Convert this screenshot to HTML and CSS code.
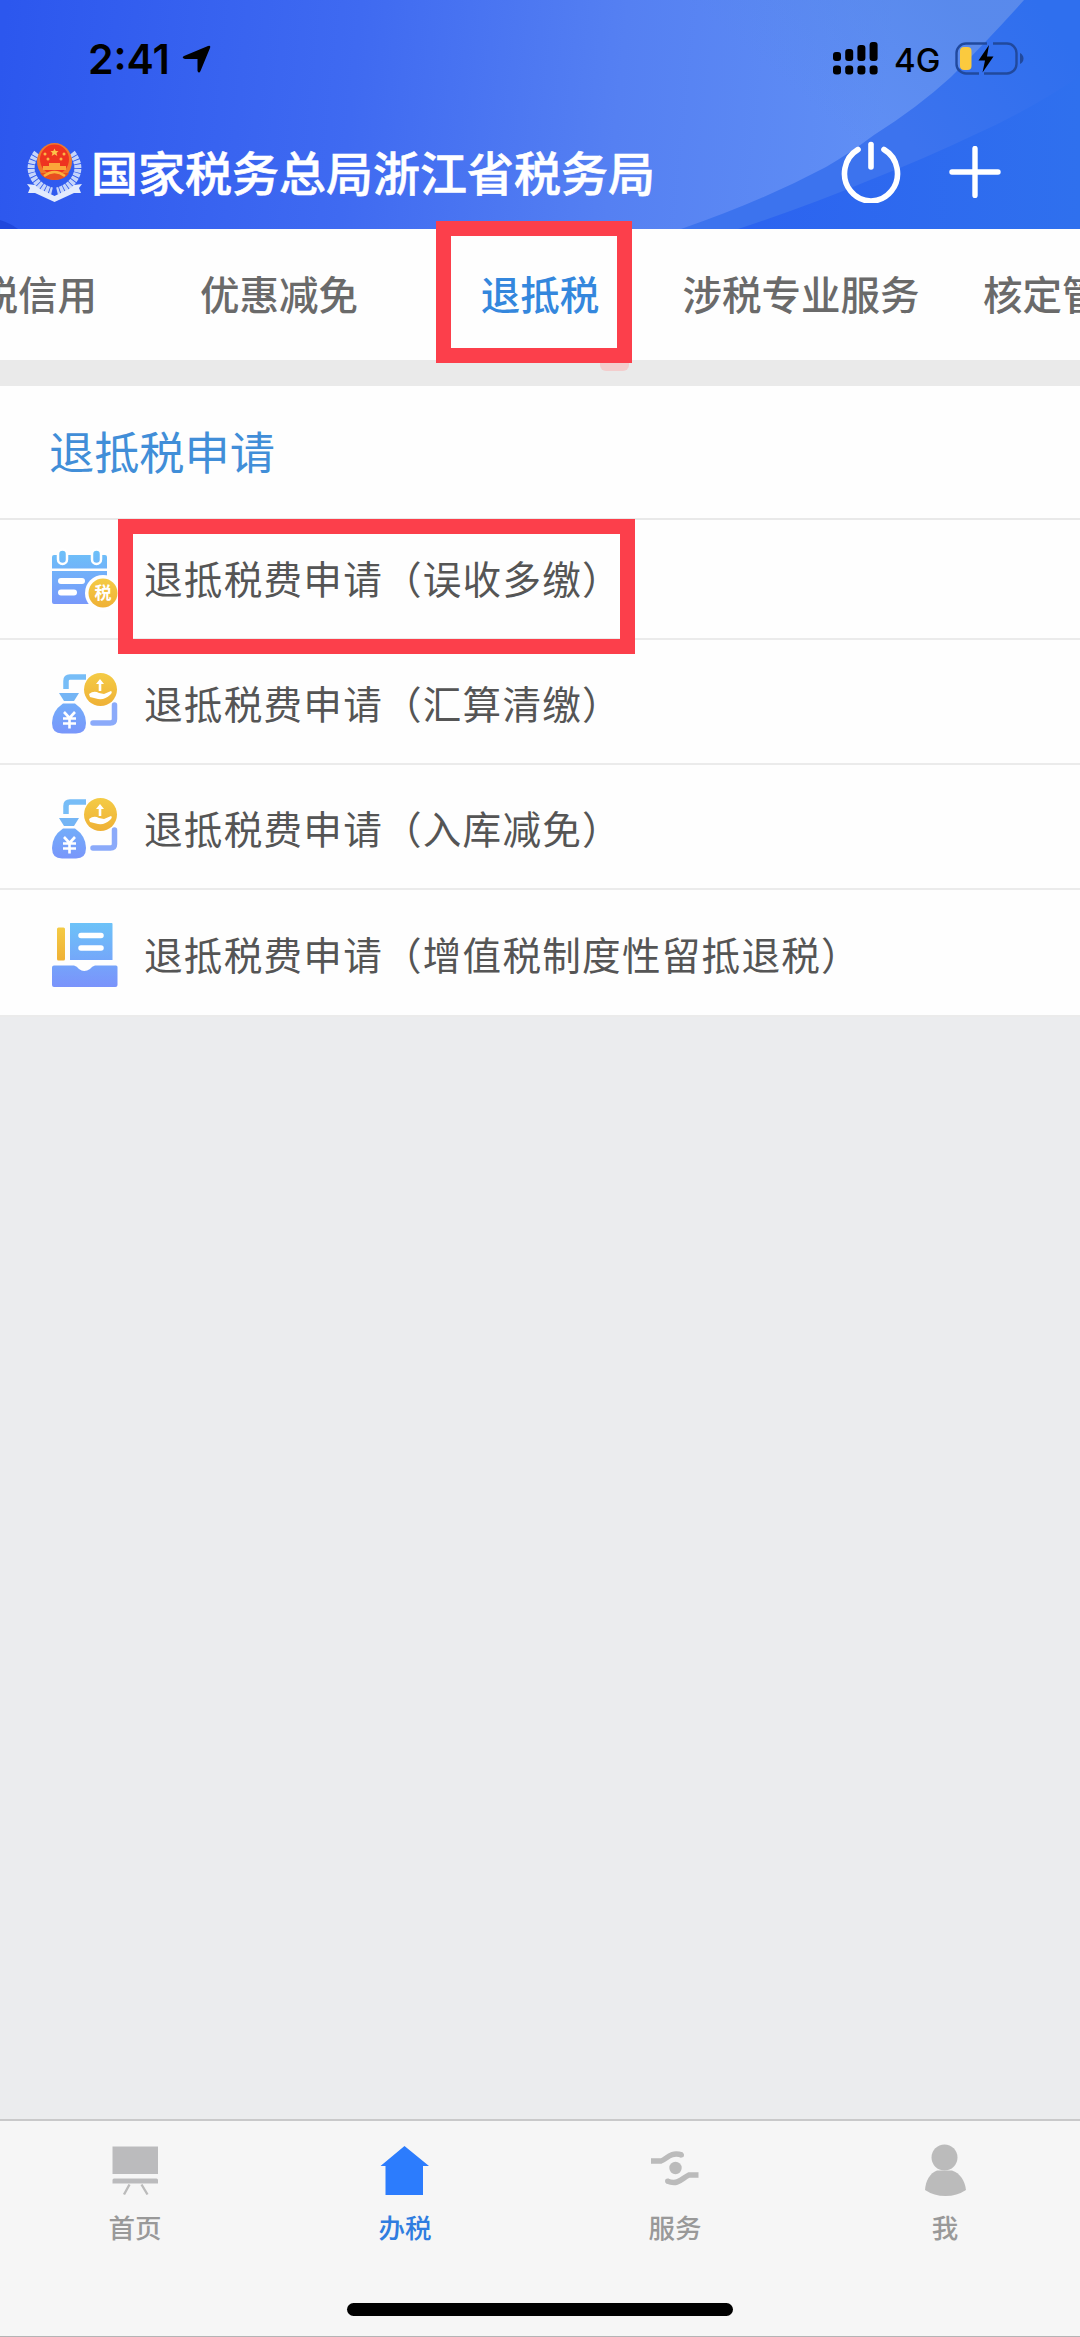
FILE: index.html
```html
<!DOCTYPE html>
<html lang="zh-CN">
<head>
    <meta charset="UTF-8">
    <meta name="viewport" content="width=device-width, initial-scale=1.0">
    <title>退抵税</title>
    <link rel="stylesheet" href="styles.css">
</head>
<body>
    <div class="app">
        <header class="header">
            <svg class="header-bg" viewBox="0 0 1080 229" preserveAspectRatio="none">
                <defs>
                    <linearGradient id="sky" gradientUnits="userSpaceOnUse" x1="0" y1="60" x2="880" y2="150">
                        <stop offset="0" stop-color="#2c57ee"/>
                        <stop offset="0.4" stop-color="#3f6af1"/>
                        <stop offset="0.7" stop-color="#5580f2"/>
                        <stop offset="1" stop-color="#608ff5"/>
                    </linearGradient>
                    <linearGradient id="shade" gradientUnits="userSpaceOnUse" x1="950" y1="0" x2="840" y2="130">
                        <stop offset="0" stop-color="#5486e6" stop-opacity="0.6"/>
                        <stop offset="1" stop-color="#5486e6" stop-opacity="0"/>
                    </linearGradient>
                    <linearGradient id="deep" x1="0" y1="0" x2="1" y2="0">
                        <stop offset="0" stop-color="#2c63f0"/>
                        <stop offset="1" stop-color="#2f70ee"/>
                    </linearGradient>
                    <linearGradient id="band" gradientUnits="userSpaceOnUse" x1="900" y1="130" x2="1050" y2="20">
                        <stop offset="0" stop-color="#3c73ee"/>
                        <stop offset="1" stop-color="#2f6fee"/>
                    </linearGradient>
                </defs>
                <rect width="1080" height="229" fill="url(#sky)"/>
                <rect width="1080" height="229" fill="url(#shade)"/>
                <path d="M0 220Q10 223 18 229H0z" fill="#2148dc"/>
                <path d="M1024 0Q990 38 951 77Q917 108 874 135Q850 153 826 167Q760 202 681 229H1080V0z" fill="url(#band)"/>
                <path d="M738 229Q808 206 870 180Q926 158 974 135Q1030 110 1080 76V229z" fill="url(#deep)"/>
            </svg>
            <div class="status">
                <div class="status-left">
                    <span class="time">2:41</span>
                    <svg width="29" height="28" viewBox="0 0 29 28"><path d="M26 1Q29 0 28 3L18.500 26Q17 29 15.500 26V14H3Q-1 13 2 11z"/></svg>
                </div>
                <div class="status-right">
                    <svg width="45" height="33" viewBox="0 0 45 33">
                        <rect x="0" y="10" width="8" height="9" rx="3"/><rect x="12.200" y="7" width="8" height="12" rx="3"/>
                        <rect x="24.400" y="3" width="8" height="16" rx="3"/><rect x="36.600" y="0" width="8" height="19" rx="3"/>
                        <rect x="0" y="23.500" width="8" height="9" rx="3"/><rect x="12.200" y="23.500" width="8" height="9" rx="3"/>
                        <rect x="24.400" y="23.500" width="8" height="9" rx="3"/><rect x="36.600" y="23.500" width="8" height="9" rx="3"/>
                    </svg>
                    <span class="network">4G</span>
                    <svg width="69" height="33" viewBox="0 0 69 33">
                        <path d="M32 1.500H11A9.500 9.500 0 0 0 1.500 11V22A9.500 9.500 0 0 0 11 31.500H24M38 1.500H52A9.500 9.500 0 0 1 61.500 11V22A9.500 9.500 0 0 1 52 31.500H29" fill="none" stroke="#21499d" stroke-width="2.400"/>
                        <path d="M65 11Q68.500 13 68.500 16.500T65 22z" fill="#21499d"/>
                        <rect x="5" y="5" width="11.500" height="23" rx="4" fill="#fbca3e"/>
                        <path d="M34 3L23.500 18.500H30L27.500 30.500L38.500 14.500H32z"/>
                    </svg>
                </div>
            </div>
            <div class="titlebar">
                <svg width="58" height="60" viewBox="0 0 58 60">
                    <g fill="none" stroke="#c6d5fa">
                        <path d="M11 11Q1 24 8 36Q14 46 26 49" stroke-width="7" stroke-dasharray="3.500 0.800"/>
                        <path d="M46 11Q56 24 49 36Q43 46 31 49" stroke-width="7" stroke-dasharray="3.500 0.800"/>
                    </g>
                    <path d="M1 42L9 43L14 47L28.500 54L43 47L48 43L56 42L53 46L55 51L48 51L28.500 60L9 51L2 51L4 46z" fill="#e3ebfd"/>
                    <ellipse cx="28.500" cy="19.500" rx="17.500" ry="18.500" fill="#f0782c"/>
                    <ellipse cx="28.500" cy="17.500" rx="14.500" ry="15" fill="#ee3420"/>
                    <path d="M28.500 6.500L29.700 9L32.500 9L30.500 11L31.300 14L28.500 12.300L25.700 14L26.500 11L24.500 9L27.300 9z" fill="#fcc34a"/>
                    <g fill="#fbb544"><circle cx="19" cy="12" r="1.500"/><circle cx="38" cy="12" r="1.500"/><circle cx="22" cy="17" r="1.500"/><circle cx="35" cy="17" r="1.500"/></g>
                    <path d="M23 21H34V24H40V28H17V24H23z" fill="#fba53a"/>
                    <path d="M14 31H43Q39 38 28.500 38Q18 38 14 31z" fill="#e8501f"/>
                    <path d="M18 34Q28.500 26 39 34" stroke="#fbb13d" stroke-width="2.500" fill="none"/>
                </svg>
                <h1 class="title">国家税务总局浙江省税务局</h1>
                <svg class="power" width="60" height="62" viewBox="0 0 60 62">
                    <g fill="none" stroke="#fff" stroke-width="5.600" stroke-linecap="round"><path d="M17 8.500A26.500 27.500 0 1 0 43 8.500"/><path d="M30 3.500V26"/></g>
                </svg>
                <svg width="52" height="52" viewBox="0 0 52 52"><path d="M3 26H49M26 2.500V49.500" stroke="#fff" stroke-width="5.400" stroke-linecap="round"/></svg>
            </div>
        </header>

        <nav class="tabs">
            <div class="tab">纳税信用</div>
            <div class="tab">优惠减免</div>
            <div class="tab active">退抵税</div>
            <div class="tab">涉税专业服务</div>
            <div class="tab">核定管理</div>
            <div class="mark mark-tab"></div>
            <div class="smudge"></div>
        </nav>

        <main class="content">
            <h2 class="section-title">退抵税申请</h2>
            <ul class="list">
                <li class="item">
                    <svg class="icon" viewBox="0 0 66 66">
                        <defs>
                            <linearGradient id="blue" gradientUnits="userSpaceOnUse" x1="0" y1="0" x2="0" y2="66">
                                <stop offset="0" stop-color="#6cc4f8"/><stop offset="1" stop-color="#7a93fb"/>
                            </linearGradient>
                            <linearGradient id="gold" x1="0" y1="0" x2="0" y2="1">
                                <stop offset="0" stop-color="#f4cb45"/><stop offset="1" stop-color="#efb136"/>
                            </linearGradient>
                        </defs>
                        <path d="M2 9H53Q55 9 55 11V22.500H0V11Q0 9 2 9zM0 25H55V58H2Q0 58 0 56z" fill="url(#blue)"/>
                        <g fill="url(#blue)" stroke="#fff" stroke-width="2.500"><rect x="6" y="3.500" width="9" height="14.500" rx="4.500"/><rect x="40" y="3.500" width="9" height="14.500" rx="4.500"/></g>
                        <path d="M9 35H30M9 46.500H22" stroke="#fff" stroke-width="6" stroke-linecap="round"/>
                        <circle cx="51" cy="47" r="18" fill="#fff"/>
                        <circle cx="51" cy="47" r="14.500" fill="url(#gold)"/>
                        <text x="51" y="53" class="coin-text">税</text>
                    </svg>
                    <span>退抵税费申请（误收多缴）</span>
                    <div class="mark mark-item"></div>
                </li>
                <li class="item">
                    <svg class="icon" viewBox="0 0 66 66">
                        <g id="bag">
                            <path d="M14 17V9Q14 5 18 5H34" fill="none" stroke="#77bdf7" stroke-width="5.500"/>
                            <path d="M62.500 33V47Q62.500 51 58.500 51H41" fill="none" stroke="#8baafa" stroke-width="5.500" stroke-linecap="round"/>
                            <path d="M7 21H27L22 29H12z" fill="#74b5f5"/>
                            <path d="M11 31.500H23Q34 39 34 51Q34 61.500 24 61.500H10Q0 61.500 0 51Q0 39 11 31.500z" fill="url(#blue)"/>
                            <path d="M12 40L17.500 46L23 40M17.500 46V56.500M11 46.500H24M11 51.500H24" fill="none" stroke="#fff" stroke-width="2.600"/>
                            <circle cx="48.500" cy="17.500" r="16.500" fill="url(#gold)"/>
                            <path d="M48 7L52 12H49.300V19H46.700V12H44z" fill="#fff"/>
                            <path d="M37 22Q42 18 47 21L52 22L59 19Q61 20 58 23Q53 28 46 27L38 25z" fill="#fff"/>
                        </g>
                    </svg>
                    <span>退抵税费申请（汇算清缴）</span>
                </li>
                <li class="item">
                    <svg class="icon" viewBox="0 0 66 66"><use href="#bag"/></svg>
                    <span>退抵税费申请（入库减免）</span>
                </li>
                <li class="item">
                    <svg class="icon" viewBox="0 0 66 66">
                        <g transform="translate(0 -2)">
                            <rect x="5" y="6.500" width="8" height="33" rx="1.500" fill="url(#gold)"/>
                            <path d="M20 1H58Q60.500 1 60.500 3.500V39H18V3Q18 1 20 1z" fill="url(#blue)"/>
                            <path d="M29 14.500H49M29 27H49" stroke="#fff" stroke-width="5.500" stroke-linecap="round"/>
                            <path d="M2 44.500H22Q25 45 27 48Q32 52 38 48Q40 45 43 44.500H64Q65.500 44.500 65.500 46V64Q65.500 66 63.500 66H2Q0 66 0 64V46.500Q0 44.500 2 44.500z" fill="url(#blue)"/>
                        </g>
                    </svg>
                    <span>退抵税费申请（增值税制度性留抵退税）</span>
                </li>
            </ul>
        </main>

        <footer class="tabbar">
            <div class="nav">
                <div class="nav-item">
                    <svg width="52" height="52" viewBox="0 0 52 52"><path d="M3.500 2.500H49V30H3.500zM5 34.500H47.500Q49 34.500 49 36V39.500H3.500V36Q3.500 34.500 5 34.500z" fill="#bbbbbd"/><path d="M20.500 40.500L15 50.500M32.500 40.500L38.500 50.500" stroke="#bbb" stroke-width="2.400"/></svg>
                    <span>首页</span>
                </div>
                <div class="nav-item active">
                    <svg width="52" height="52" viewBox="0 0 52 52"><path d="M25.500 2L50 22H44V51H6.500V22H1.500z" fill="#2c7cfd"/></svg>
                    <span>办税</span>
                </div>
                <div class="nav-item">
                    <svg width="52" height="52" viewBox="0 0 52 52"><g fill="none" stroke="#bbb" stroke-width="5.500"><path d="M2 17H12C18 15 21 7.500 33 11"/><path d="M49.500 31H40C33 34 30 41.500 18 37"/></g><circle cx="26.500" cy="24" r="6.200" fill="#bbb"/><circle cx="32.500" cy="11" r="2.500" fill="#bbb"/><circle cx="18.500" cy="37" r="2.500" fill="#bbb"/></svg>
                    <span>服务</span>
                </div>
                <div class="nav-item">
                    <svg width="52" height="52" viewBox="0 0 52 52"><circle cx="25.500" cy="13.500" r="13" fill="#bbb"/><path d="M18 26.500H33C41 29 46 37 47 46Q38 52 26.500 52T6 46C6.500 37 11 29 18 26.500z" fill="#bbb"/></svg>
                    <span>我</span>
                </div>
            </div>
            <div class="home-indicator"></div>
        </footer>
    </div>
</body>
</html>
```

FILE: styles.css
```css
* {
    box-sizing: border-box;
}
body {
    margin: 0;
    font-family: "Noto Sans CJK SC", sans-serif;
    background-color: #ebecee;
}
svg {
    display: block;
    flex-shrink: 0;
}
.app {
    width: 1080px;
    height: 2337px;
    display: flex;
    flex-direction: column;
    overflow: hidden;
}

/* header */
.header {
    position: relative;
    height: 229px;
    flex-shrink: 0;
}
.header-bg {
    position: absolute;
    inset: 0;
    width: 100%;
    height: 100%;
}
.status {
    position: relative;
    height: 117px;
    padding: 0 56px 0 88px;
    display: flex;
    justify-content: space-between;
    align-items: center;
    font-family: Inter, sans-serif;
}
.status-left,
.status-right {
    display: flex;
    align-items: center;
}
.status-left {
    gap: 12px;
}
.time {
    font-size: 41px;
    font-weight: 600;
}
.network {
    width: 44px;
    margin: 3px 17px 0 16px;
    font-size: 33px;
    font-weight: 500;
    line-height: 40px;
}
.titlebar {
    position: relative;
    height: 112px;
    padding: 0 79px 2px 26px;
    display: flex;
    align-items: center;
}
.title {
    margin: 0 0 0 7px;
    padding-bottom: 3px;
    font-size: 47px;
    font-weight: 500;
    line-height: 68px;
    color: #fff;
    white-space: nowrap;
    -webkit-text-stroke: 0.6px #fff;
}
.power {
    margin: 0 48px 0 auto;
}

/* category tabs */
.tabs {
    position: relative;
    display: flex;
    justify-content: center;
    height: 131px;
    flex-shrink: 0;
    background-color: #fefefe;
}
.tab {
    flex: 0 0 261px;
    text-align: center;
    font-size: 39.500px;
    font-weight: 500;
    line-height: 127px;
    color: #6a6a6a;
    white-space: nowrap;
}
.tab.active {
    color: #3487dd;
}

/* red frames */
.mark {
    position: absolute;
    z-index: 1;
    border: 15.500px solid #fc3f4b;
}
.mark-tab {
    left: 436px;
    top: -8px;
    width: 196px;
    height: 142px;
}
.mark-item {
    left: 118px;
    top: -1px;
    width: 517px;
    height: 135px;
}
.smudge {
    position: absolute;
    left: 600px;
    top: 134px;
    width: 29px;
    height: 8px;
    border-radius: 0 0 6px 6px;
    background-color: #f3cdcd;
}

/* list */
.content {
    flex: 1;
    padding-top: 26px;
    background: linear-gradient(#eaeaea 26px, #ebecee 26px);
}
.section-title {
    height: 134px;
    margin: 0;
    padding-left: 49px;
    font-size: 45.200px;
    font-weight: 400;
    line-height: 129px;
    color: #418ed8;
    background-color: #fefefe;
    border-bottom: 2px solid #e9e9e9;
}
.list {
    margin: 0;
    padding: 0;
    list-style: none;
}
.item {
    position: relative;
    display: flex;
    align-items: center;
    gap: 26px;
    height: 125px;
    padding: 6px 0 0 52px;
    font-size: 38.600px;
    letter-spacing: 1.250px;
    line-height: 56px;
    color: #555;
    background-color: #fefefe;
    border-bottom: 2px solid #ebebeb;
}
.item:first-child {
    height: 120px;
    padding-top: 0;
}
.item:last-child {
    height: 127px;
}
.item span {
    padding-bottom: 5px;
}
.icon {
    width: 66px;
    height: 66px;
}
.coin-text {
    font-size: 17px;
    font-weight: 700;
    letter-spacing: 0;
    text-anchor: middle;
    fill: #fff;
}

/* bottom bar */
.tabbar {
    height: 218px;
    flex-shrink: 0;
    display: flex;
    flex-direction: column;
    justify-content: space-between;
    align-items: center;
    background-color: #f6f6f6;
    border-top: 2px solid #c9c9ca;
    border-bottom: 1px solid #b4b4b4;
}
.nav {
    width: 100%;
    display: grid;
    grid-template-columns: repeat(4, 1fr);
    padding-top: 23px;
}
.nav-item {
    display: flex;
    flex-direction: column;
    align-items: center;
    gap: 11px;
    font-size: 26.500px;
    font-weight: 500;
    line-height: 40px;
    color: #999;
}
.nav-item.active {
    color: #2f7de0;
}
.home-indicator {
    width: 386px;
    height: 13px;
    margin-bottom: 20px;
    border-radius: 7px;
    background-color: #000;
}
```
